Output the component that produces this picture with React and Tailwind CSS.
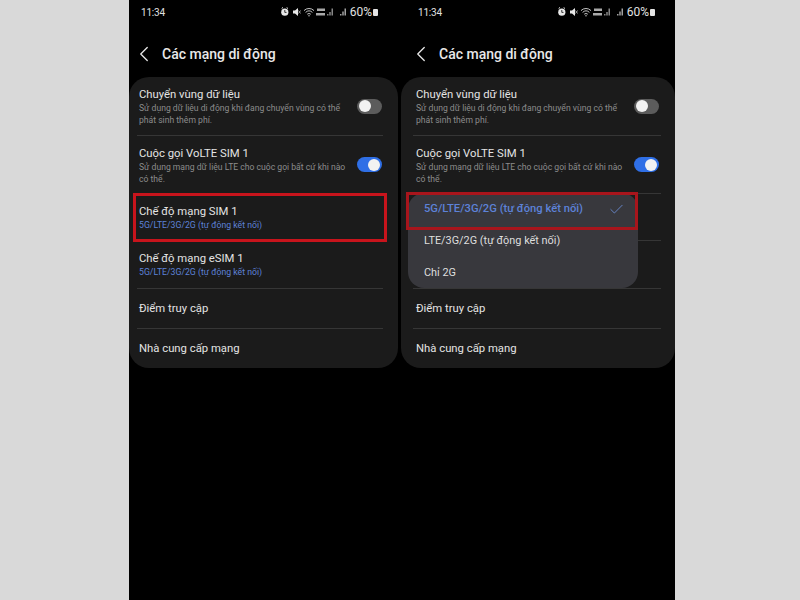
import React from "react";
import { Check, ChevronLeft } from "lucide-react";

function StatusIcons() {
  return (
    <svg width="66" height="10" viewBox="0 0 66 10" fill="none" className="shrink-0">
      <circle cx="3.8" cy="5.2" r="3.6" fill="#e8e8e8" />
      <path d="M0.6 1.6l1.4-1.2M7 1.6L5.6 0.4" stroke="#e8e8e8" strokeWidth="1" />
      <path d="M3.8 3v2.4h1.7" stroke="#222" strokeWidth="0.9" />
      <path d="M12 3.5h2l3-2.5v8l-3-2.5h-2z" fill="#e8e8e8" />
      <path d="M17.5 3.5l2 3M19.5 3.5l-2 3" stroke="#bbb" strokeWidth="0.8" />
      <path d="M23 3.6a7 7 0 0 1 10 0M24.6 5.4a5 5 0 0 1 6.8 0M26.2 7.2a2.8 2.8 0 0 1 3.6 0" stroke="#d8d8d8" strokeWidth="0.9" />
      <path d="M27.3 8.8h1.4" stroke="#d8d8d8" strokeWidth="1" />
      <path d="M36 1.5h8v2.4h-8zM35 6h9v2.6h-9z" fill="#a8a8a8" />
      <path d="M46.8 8.6V7M49 8.6V5M51.2 8.6V1.5" stroke="#a8a8a8" strokeWidth="1.2" />
      <path d="M59.8 8.6V7M62 8.6V4.5M64.2 8.6V1.5" stroke="#c8c8c8" strokeWidth="1.2" />
    </svg>
  );
}

function Toggle({ on }) {
  return on ? (
    <div className="flex h-[15px] w-[25px] shrink-0 items-center justify-end rounded-full bg-[#2f6fe6] pr-[2px]">
      <div className="h-[12px] w-[12px] rounded-full bg-[#f2f2f2]" />
    </div>
  ) : (
    <div className="flex h-[15px] w-[25px] shrink-0 items-center rounded-full bg-[#5c5c5c] pl-[2px]">
      <div className="h-[12px] w-[12px] rounded-full bg-[#f2f2f2]" />
    </div>
  );
}

function Divider({ inset }) {
  return <div className={`h-px bg-[#363636] ${inset}`} />;
}

function SwitchRow({ title, text, on, height, pad }) {
  return (
    <div className={`flex items-center justify-between pr-[16px] ${pad} ${height}`}>
      <div className="w-[210px]">
        <div className="pt-[1px] text-[11.3px] leading-[15px] text-[#e4e4e4]">{title}</div>
        <div className="text-[8.6px] leading-[12px] text-[#8c8c8c]">{text}</div>
      </div>
      <Toggle on={on} />
    </div>
  );
}

function ValueRow({ title, height, boxed, pad }) {
  return (
    <div className={`relative flex flex-col justify-center ${pad} ${height}`}>
      <div className="text-[11.3px] leading-[15px] text-[#e4e4e4]">{title}</div>
      <div className="text-[8.7px] leading-[12px] text-[#5d82d8]">5G/LTE/3G/2G (tự động kết nối)</div>
      {boxed && <div className="absolute -bottom-[2px] left-[4px] right-[11px] -top-[1px] border-[3px] border-[#c8141c]" />}
    </div>
  );
}

function PlainRow({ title, pad, height }) {
  return <div className={`flex items-center pt-[1px] text-[11.3px] text-[#e4e4e4] ${pad} ${height}`}>{title}</div>;
}

function Phone({ width, menu, boxed, pad, statusPad, headerPad, inset }) {
  return (
    <div className={`relative h-[600px] shrink-0 bg-black ${width}`}>
      <div className={`flex h-[24px] items-center justify-between pr-[20px] text-[10px] tracking-[-0.2px] text-[#e0e0e0] ${statusPad}`}>
        <span>11:34</span>
        <div className="flex items-center">
          <StatusIcons />
          <span className="ml-[3px] text-[12px] leading-[12px] tracking-normal">60%</span>
          <div className="ml-[1px] h-[7px] w-[5px] rounded-[1px] bg-[#e5e5e5]" />
        </div>
      </div>
      <div className={`flex h-[53px] items-center pt-[7px] ${headerPad}`}>
        <ChevronLeft size={26} strokeWidth={1.2} color="#e8e8e8" />
        <span className="ml-[5px] text-[14px] font-medium text-[#e8e8e8]">Các mạng di động</span>
      </div>
      <div className="relative h-[291px] rounded-[20px] bg-[#1b1b1b]">
        <SwitchRow pad={pad} height="h-[58px]" title="Chuyển vùng dữ liệu" text="Sử dụng dữ liệu di động khi đang chuyển vùng có thể phát sinh thêm phí." />
        <Divider inset={inset} />
        <SwitchRow pad={pad} height="h-[57px]" on title="Cuộc gọi VoLTE SIM 1" text="Sử dụng mạng dữ liệu LTE cho cuộc gọi bất cứ khi nào có thể." />
        <Divider inset={inset} />
        <ValueRow pad={pad} height="h-[46px]" title="Chế độ mạng SIM 1" boxed={boxed} />
        <Divider inset={inset} />
        <ValueRow pad={pad} height="h-[47px]" title="Chế độ mạng eSIM 1" />
        <Divider inset={inset} />
        <PlainRow pad={pad} height="h-[39px]" title="Điểm truy cập" />
        <Divider inset={inset} />
        <PlainRow pad={pad} height="h-[40px]" title="Nhà cung cấp mạng" />
        {menu && (
          <div className="absolute left-[7px] top-[116px] w-[230px] rounded-[16px] bg-[#38383d] text-[#dedede]">
            <div className="flex h-[32px] items-center justify-between pl-[16px] pr-[13px] pt-[1px] text-[11.2px] font-medium text-[#5d82d8]">
              <span className="whitespace-nowrap">5G/LTE/3G/2G (tự động kết nối)</span>
              <Check size={17} strokeWidth={1.2} color="#6c8fd8" />
            </div>
            <div className="flex h-[32px] items-center whitespace-nowrap pl-[16px] pt-[1px] text-[10.9px]">LTE/3G/2G (tự động kết nối)</div>
            <div className="flex h-[31px] items-center pl-[16px] pt-[2px] text-[10.9px]">Chỉ 2G</div>
            <div className="absolute -left-[2px] -top-[1px] bottom-[58px] right-0 border-[3px] border-[#a8151c]" />
          </div>
        )}
      </div>
    </div>
  );
}

export default function App() {
  return (
    <div className="flex h-[600px] w-[800px] overflow-hidden bg-[#d9d9d9] pl-[129px] [font-family:Roboto,'Noto_Sans',sans-serif]">
      <Phone width="w-[269px]" boxed pad="pl-[10px]" statusPad="pl-[12px]" headerPad="pl-[2px]" inset="ml-[8px] mr-[15px]" />
      <div className="w-[3px] shrink-0 bg-black" />
      <Phone width="w-[274px]" menu pad="pl-[15px]" statusPad="pl-[17px]" headerPad="pl-[7px]" inset="ml-[12px] mr-[14px]" />
    </div>
  );
}
